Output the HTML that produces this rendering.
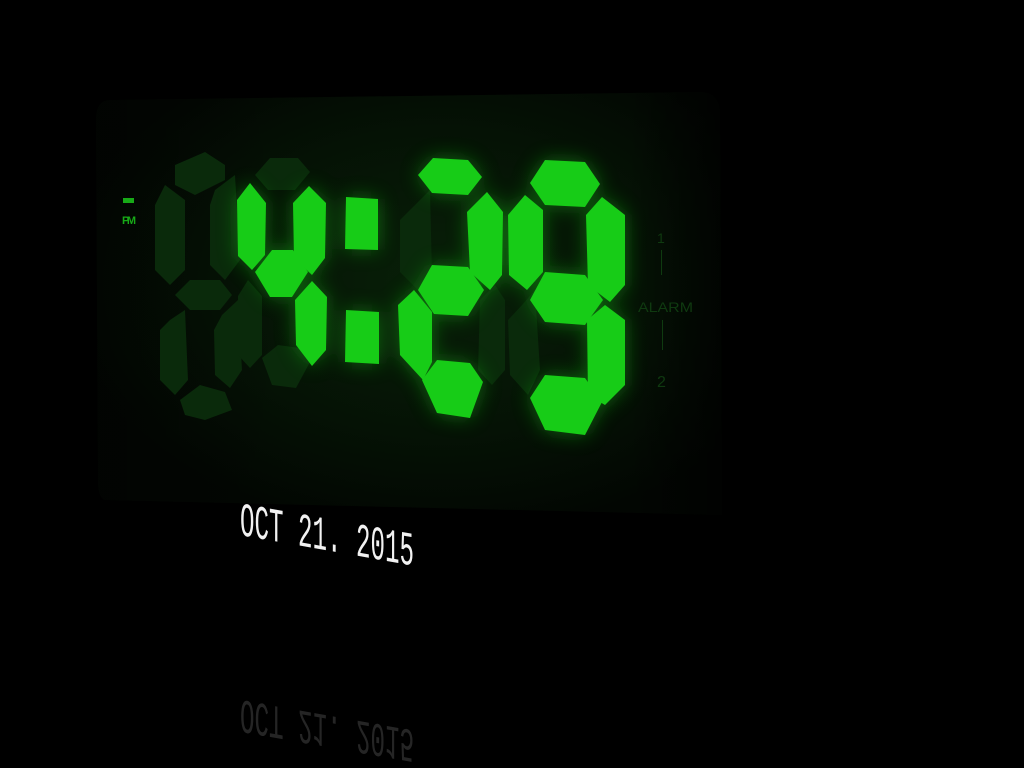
<!DOCTYPE html>
<html><head><meta charset="utf-8"><style>
html,body{margin:0;padding:0;background:#000;width:1024px;height:768px;overflow:hidden}
svg{display:block}
</style></head><body>
<svg width="1024" height="768" viewBox="0 0 1024 768" xmlns="http://www.w3.org/2000/svg">
<defs>
<radialGradient id="pg" cx="0.55" cy="0.45" r="0.6">
<stop offset="0" stop-color="#082008"/><stop offset="0.6" stop-color="#051205"/><stop offset="1" stop-color="#020602"/>
</radialGradient>
<linearGradient id="fade" x1="0" y1="0" x2="1" y2="0">
<stop offset="0" stop-color="#000" stop-opacity="0.3"/><stop offset="0.3" stop-color="#000" stop-opacity="0"/><stop offset="0.85" stop-color="#000" stop-opacity="0"/><stop offset="1" stop-color="#000" stop-opacity="0.7"/>
</linearGradient>
<filter id="glow" x="-20%" y="-20%" width="140%" height="140%"><feGaussianBlur stdDeviation="10"/></filter>
<g id="lit">
<polygon points="250,183 266,203 265,255 252,270 238,256 237,200"/>
<polygon points="309,186 326,203 325,258 312,275 294,258 293,203"/>
<polygon points="255,272 272,250 293,250 308,272 292,297 270,297"/>
<polygon points="312,281 327,297 326,350 312,366 296,345 295,300"/>
<polygon points="346,197 378,199 378,250 345,249"/>
<polygon points="346,310 379,312 379,364 345,362"/>
<polygon points="418,175 433,158 468,160 482,177 468,195 432,193"/>
<polygon points="487,192 503,212 502,275 490,290 470,272 467,212"/>
<polygon points="418,290 432,265 468,267 484,290 468,316 434,314"/>
<polygon points="414,290 432,312 432,362 423,380 400,355 398,305"/>
<polygon points="422,380 437,360 470,363 483,382 470,418 437,413"/>
<polygon points="530,183 545,160 585,162 600,184 585,207 545,205"/>
<polygon points="525,195 543,210 543,272 527,290 509,275 508,215"/>
<polygon points="602,197 625,215 625,285 610,302 588,285 586,215"/>
<polygon points="530,300 545,272 585,275 603,300 585,325 545,322"/>
<polygon points="605,305 625,320 625,385 605,405 588,395 587,320"/>
<polygon points="530,398 545,375 585,378 602,402 585,435 545,430"/>
</g>
</defs>
<rect width="1024" height="768" fill="#000"/>
<path d="M110 100 L700 92 Q720 92 720 115 L722 515 L105 500 Q98 498 98 480 L96 120 Q96 100 110 100Z" fill="url(#pg)"/>
<path d="M110 100 L700 92 Q720 92 720 115 L722 515 L105 500 Q98 498 98 480 L96 120 Q96 100 110 100Z" fill="url(#fade)"/>
<!-- dim segments -->
<g fill="#0a2a0b">
<polygon points="175,165 205,152 225,165 225,180 195,195 175,185"/>
<polygon points="165,185 185,200 185,270 170,285 155,270 155,205"/>
<polygon points="215,190 235,175 240,260 225,280 210,265 210,205"/>
<polygon points="175,295 190,280 220,280 232,295 220,310 190,310"/>
<polygon points="170,320 185,310 188,380 175,395 160,380 160,330"/>
<polygon points="222,315 238,300 242,370 230,388 215,375 214,330"/>
<polygon points="180,400 200,385 225,392 232,410 205,420 185,415"/>
<polygon points="255,175 270,158 298,158 310,172 295,190 268,190"/>
<polygon points="248,280 262,296 262,355 250,368 238,355 238,296"/>
<polygon points="262,358 278,345 300,348 310,362 296,388 272,385"/>
<polygon points="415,205 430,190 432,275 418,290 400,272 400,220"/>
<polygon points="480,300 495,285 505,300 505,370 492,385 478,370"/>
<polygon points="522,305 535,290 540,370 528,395 510,375 508,320"/>
</g>
<use href="#lit" fill="#14b814" filter="url(#glow)" opacity="0.5"/>
<use href="#lit" fill="#17cc17"/>
<!-- PM -->
<rect x="123" y="198" width="11" height="5" fill="#17aa17"/>
<text x="122" y="224" font-family="Liberation Sans, sans-serif" font-size="11" font-weight="bold" fill="#17aa17" textLength="14">PM</text>
<!-- alarm -->
<g fill="#0f3a10" font-family="Liberation Sans, sans-serif">
<text x="657" y="243" font-size="14">1</text>
<rect x="661" y="250" width="1" height="25"/>
<text x="638" y="312" font-size="14" textLength="55" lengthAdjust="spacingAndGlyphs">ALARM</text>
<rect x="662" y="320" width="1" height="30"/>
<text x="657" y="387" font-size="16">2</text>
</g>
<!-- date -->
<g transform="translate(240,535) skewY(10)">
<text x="0" y="0" font-family="Liberation Mono, monospace" font-size="48" fill="#f2f2f2" textLength="174" lengthAdjust="spacingAndGlyphs">OCT 21. 2015</text>
</g>
<!-- reflection -->
<g transform="translate(240,700) skewY(10) scale(1,-1)" opacity="0.22">
<text x="0" y="0" font-family="Liberation Mono, monospace" font-size="48" fill="#aaa" textLength="174" lengthAdjust="spacingAndGlyphs">OCT 21. 2015</text>
</g>
</svg>
</body></html>
